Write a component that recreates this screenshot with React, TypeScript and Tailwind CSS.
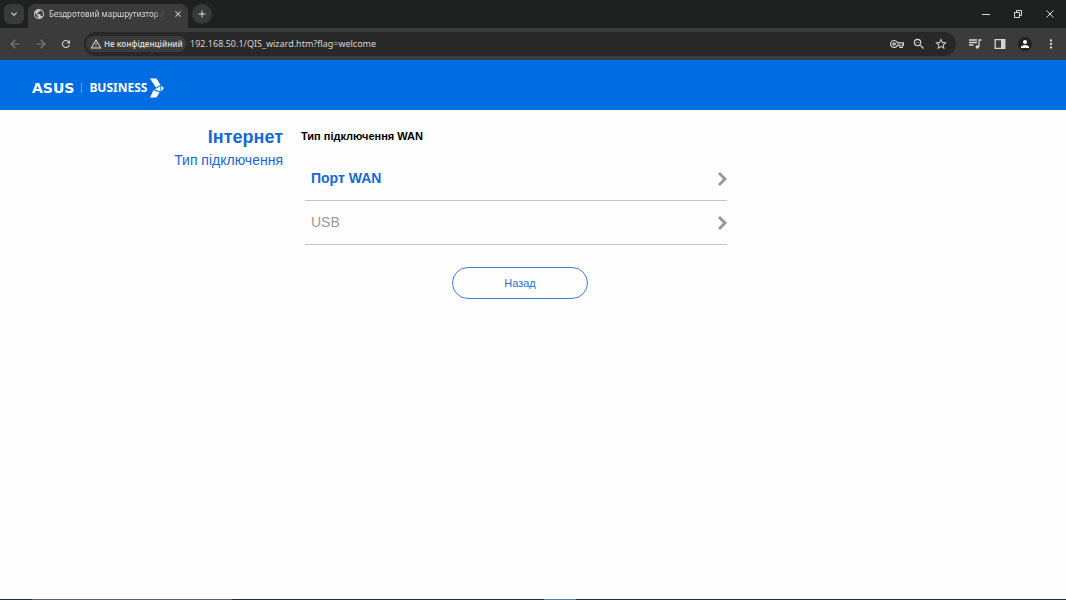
import React from "react"
import {
  MdArrowBack,
  MdArrowForward,
  MdClose,
  MdKeyboardArrowDown,
  MdMoreVert,
  MdOutlineStarBorder,
  MdOutlineVpnKey,
  MdOutlineWarningAmber,
  MdOutlineZoomOut,
  MdPerson,
  MdPublic,
  MdRefresh,
  MdAdd,
} from "react-icons/md"

interface ConnectionOptionProps {
  label: string
  active?: boolean
}

const TabStrip: React.FC = () => (
  <div className="flex h-7 items-center bg-[#1f2121] text-[#dadada]">
    <button aria-label="Пошук вкладок" className="ml-1 flex size-5 items-center justify-center rounded-md bg-[#393a3a]">
      <MdKeyboardArrowDown className="size-3" />
    </button>
    <div className="ml-1 flex h-6 w-40 items-center self-end rounded-t-lg bg-[#3b3b3b] px-1 pb-1">
      <MdPublic className="ml-px size-3 shrink-0 text-[#c5c8ca]" />
      <span className="ml-1 w-29 whitespace-nowrap text-[8px] mask-r-from-90% mask-r-to-100%">
        Бездротовий маршрутизтор A
      </span>
      <button aria-label="Закрити вкладку" className="ml-2">
        <MdClose className="size-2.5" />
      </button>
    </div>
    <button aria-label="Нова вкладка" className="ml-1 flex size-5 items-center justify-center rounded-full bg-[#393a3a]">
      <MdAdd className="size-3" />
    </button>
    <div className="ml-auto flex items-center gap-6 pr-3">
      <button aria-label="Згорнути" className="flex h-2 w-2 items-center">
        <span className="h-px w-2 bg-[#dadada]" />
      </button>
      <button aria-label="Відновити">
        <svg viewBox="0 0 8 8" className="size-2" fill="none" stroke="currentColor">
          <path d="M.5 2.5h5v5h-5zM2.5 2V.5h5v5H6" />
        </svg>
      </button>
      <button aria-label="Закрити">
        <svg viewBox="0 0 8 8" className="size-2" fill="none" stroke="currentColor">
          <path d="M.5.5l7 7M7.5.5l-7 7" />
        </svg>
      </button>
    </div>
  </div>
)

const Toolbar: React.FC = () => (
  <div className="flex h-8 items-center bg-[#3b3b3b] px-2 text-[#d5d5d5]">
    <div className="flex items-center gap-3">
      <button aria-label="Назад у браузері" className="text-[#7b7b7b]">
        <MdArrowBack className="size-3.5" />
      </button>
      <button aria-label="Вперед" className="text-[#7b7b7b]">
        <MdArrowForward className="size-3.5" />
      </button>
      <button aria-label="Оновити">
        <MdRefresh className="size-3" />
      </button>
    </div>
    <div className="ml-3 flex h-6 flex-1 items-center rounded-full bg-[#282828] pl-0.5 pr-2">
      <button className="flex h-4 w-25 shrink-0 items-center gap-0.5 rounded-full bg-[#3b3b3b] pl-1 text-[8px] font-semibold whitespace-nowrap">
        <MdOutlineWarningAmber className="size-3 shrink-0" />
        Не конфіденційний
      </button>
      <input
        aria-label="Адресний рядок"
        defaultValue="192.168.50.1/QIS_wizard.htm?flag=welcome"
        className="ml-1 min-w-0 flex-1 bg-transparent text-[9px] outline-none"
      />
      <div className="flex items-center gap-2">
        <button aria-label="Паролі">
          <MdOutlineVpnKey className="size-3.5" />
        </button>
        <button aria-label="Масштаб">
          <MdOutlineZoomOut className="size-3.5" />
        </button>
        <button aria-label="Додати закладку">
          <MdOutlineStarBorder className="size-3.5" />
        </button>
      </div>
    </div>
    <div className="ml-3 flex items-center gap-3">
      <button aria-label="Керування медіа">
        <svg viewBox="0 0 14 14" className="size-3.5" fill="none" stroke="currentColor" strokeWidth="1.3">
          <path d="M1 3h8M1 5.500h8M1 8h4.500M13.500 3h-2.500v7" />
          <circle cx="9.300" cy="10" r="1.700" fill="currentColor" stroke="none" />
        </svg>
      </button>
      <button aria-label="Бічна панель">
        <svg viewBox="0 0 12 12" className="size-3">
          <path fill="none" stroke="currentColor" strokeWidth="1.3" d="M1.2 1.7h9.6v8.6H1.2z" />
          <path fill="currentColor" d="M7 1.5h4v9H7z" />
        </svg>
      </button>
      <button aria-label="Профіль" className="flex size-3.5 items-center justify-center rounded-full bg-[#202124] text-white">
        <MdPerson className="size-3" />
      </button>
      <button aria-label="Меню">
        <MdMoreVert className="size-3.5" />
      </button>
    </div>
  </div>
)

const Header: React.FC = () => (
  <header className="flex h-[50px] items-center bg-[#006ce1] pt-1.5 pl-8 text-white">
    <span className="font-['DejaVu_Sans',sans-serif] text-[14px] leading-5 font-bold">ASUS</span>
    <span className="mx-[7px] h-2.5 w-px bg-[#69a7ed]" />
    <span className="font-['Noto_Sans',sans-serif] text-[12px] leading-5 font-bold">BUSINESS</span>
    {/* faceted chevron, blue seams between the pieces */}
    <svg viewBox="0 0 14 20" className="ml-[3px] h-5 w-3.5" fill="currentColor">
      <path d="M0 .5h6.500l4 6.500L6 9.500z" />
      <path d="M0 19.500l3.500-7.200 6 2.200-3 5z" />
      <path d="M4.500 11.500L10.300 8.200v5.300z" />
      <path d="M11.200 7.700L14 10l-2.800 3.500z" />
    </svg>
  </header>
)

const ConnectionOption: React.FC<ConnectionOptionProps> = ({ label, active }) => (
  <li className="border-b border-[#c5c5c5]">
    <button className="flex h-[43px] w-full items-center justify-between pl-1.5 text-left">
      <span className={active ? "text-[14px] font-bold text-[#1668d3]" : "text-[14px] text-[#999999]"}>{label}</span>
      <svg viewBox="0 0 10 14" className="h-3.5 w-2.5" fill="none" stroke="#969696" strokeWidth="2.8">
        <path d="M2 1l6 6-6 6" />
      </svg>
    </button>
  </li>
)

const App: React.FC = () => {
  return (
    <div className="flex min-h-screen flex-col bg-[#fefefe] font-['Liberation_Sans',Arial,sans-serif]">
      <div className="font-['Noto_Sans',sans-serif]">
        <TabStrip />
        <Toolbar />
      </div>
      <Header />
      <main className="flex flex-1 pt-4">
        <div className="w-[283px] text-right text-[#1668d3]">
          <h1 className="text-[18px] leading-[22px] font-bold">Інтернет</h1>
          <p className="text-[14px] leading-6">Тип підключення</p>
        </div>
        <section className="ml-[18px] w-[426px]">
          <h2 className="text-[11px] leading-5 font-bold text-black">Тип підключення WAN</h2>
          <ul className="mt-[11px] ml-1">
            <ConnectionOption label="Порт WAN" active />
            <ConnectionOption label="USB" />
          </ul>
          <div className="mt-[22px] flex justify-center pl-3">
            <button className="h-8 w-34 rounded-full border border-[#3c7fdb] text-[11px] text-[#2a70d6]">Назад</button>
          </div>
        </section>
      </main>
      <footer className="flex h-px bg-[#1d3038]">
        <span className="ml-8 w-50 bg-[#56646c]" />
        <span className="ml-78 w-8 bg-[#4f819c]" />
      </footer>
    </div>
  )
}

export default App
